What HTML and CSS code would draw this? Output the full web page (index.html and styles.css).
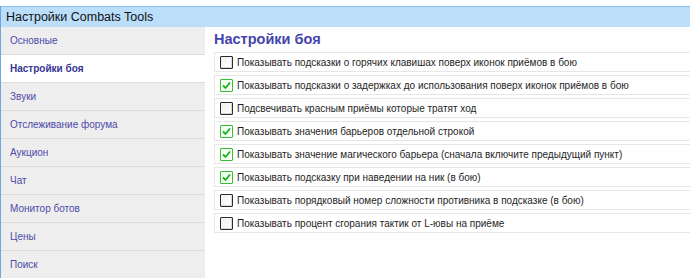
FILE: index.html
```html
<!DOCTYPE html>
<html>
  <head>
    <title>Настройки Combats Tools</title>
    <meta charset="utf-8" />
    <link rel="stylesheet" href="styles.css">
  </head>
  <body>
    <div class="window">
      <div class="titlebar">Настройки Combats Tools</div>
      <div class="main">
        <ul class="sidebar">
          <li>Основные</li>
          <li class="active">Настройки боя</li>
          <li>Звуки</li>
          <li>Отслеживание форума</li>
          <li>Аукцион</li>
          <li>Чат</li>
          <li>Монитор ботов</li>
          <li>Цены</li>
          <li>Поиск</li>
        </ul>
        <div class="content">
          <h3>Настройки боя</h3>
          <div class="option"><span class="box"></span>Показывать подсказки о горячих клавишах поверх иконок приёмов в бою</div>
          <div class="option"><span class="box checked"><svg viewBox="0 0 11 11"><path d="M2 5.5 L4.5 8 L9 2.5" /></svg></span>Показывать подсказки о задержках до использования поверх иконок приёмов в бою</div>
          <div class="option"><span class="box"></span>Подсвечивать красным приёмы которые тратят ход</div>
          <div class="option"><span class="box checked"><svg viewBox="0 0 11 11"><path d="M2 5.5 L4.5 8 L9 2.5" /></svg></span>Показывать значения барьеров отдельной строкой</div>
          <div class="option"><span class="box checked"><svg viewBox="0 0 11 11"><path d="M2 5.5 L4.5 8 L9 2.5" /></svg></span>Показывать значение магического барьера (сначала включите предыдущий пункт)</div>
          <div class="option"><span class="box checked"><svg viewBox="0 0 11 11"><path d="M2 5.5 L4.5 8 L9 2.5" /></svg></span>Показывать подсказку при наведении на ник (в бою)</div>
          <div class="option"><span class="box"></span>Показывать порядковый номер сложности противника в подсказке (в бою)</div>
          <div class="option"><span class="box"></span>Показывать процент сгорания тактик от L-ювы на приёме</div>
        </div>
      </div>
    </div>
  </body>
</html>
```

FILE: styles.css
```css
html, body {
  margin: 0;
  background: #fff;
}
body {
  padding-top: 6px;
  font-family: "Liberation Sans", Arial, sans-serif;
  font-size: 10px;
  color: #1e1e1e;
}
.window {
  border-left: 1px solid #6ea6de;
  height: 272px;
  overflow: hidden;
}
.titlebar {
  height: 20px;
  line-height: 20px;
  border-top: 1px solid #8cc0ee;
  background: #bbdefb;
  padding-left: 5px;
  font-size: 12.5px;
  color: #111;
}
.main {
  display: flex;
}
.sidebar {
  list-style: none;
  margin: 0;
  padding: 0;
  width: 204px;
  flex-shrink: 0;
  background: #eeeeee;
}
.sidebar li {
  height: 27px;
  line-height: 27px;
  padding-left: 9px;
  border-bottom: 1px solid #dcdcdc;
  color: #4d4aa8;
  font-size: 10px;
}
.sidebar li.active {
  background: #fff;
  color: #363694;
  font-weight: bold;
}
.content {
  flex: 1;
  min-width: 0;
  padding: 4px 0 0 9px;
}
.content h3 {
  margin: 0 0 4px;
  font-size: 14.5px;
  line-height: 17px;
  color: #4345ad;
}
.option {
  display: flex;
  align-items: center;
  gap: 4px;
  height: 18px;
  border: 1px solid #e6e6e6;
  border-right: none;
  margin-bottom: 3px;
  padding-left: 5px;
  white-space: nowrap;
  font-size: 10px;
}
.box {
  flex-shrink: 0;
  width: 11px;
  height: 11px;
  border: 1px solid #2a2a2a;
  border-radius: 1px;
  background: linear-gradient(135deg, #f0f0f0, #fff);
  box-shadow: inset -1px -1px 0 #d8d8d8;
}
.box.checked {
  border-color: #35c035;
  background: #f4fff4;
  box-shadow: none;
}
.box svg {
  display: block;
  width: 11px;
  height: 11px;
}
.box path {
  fill: none;
  stroke: #1cae1c;
  stroke-width: 1.8;
}
```
